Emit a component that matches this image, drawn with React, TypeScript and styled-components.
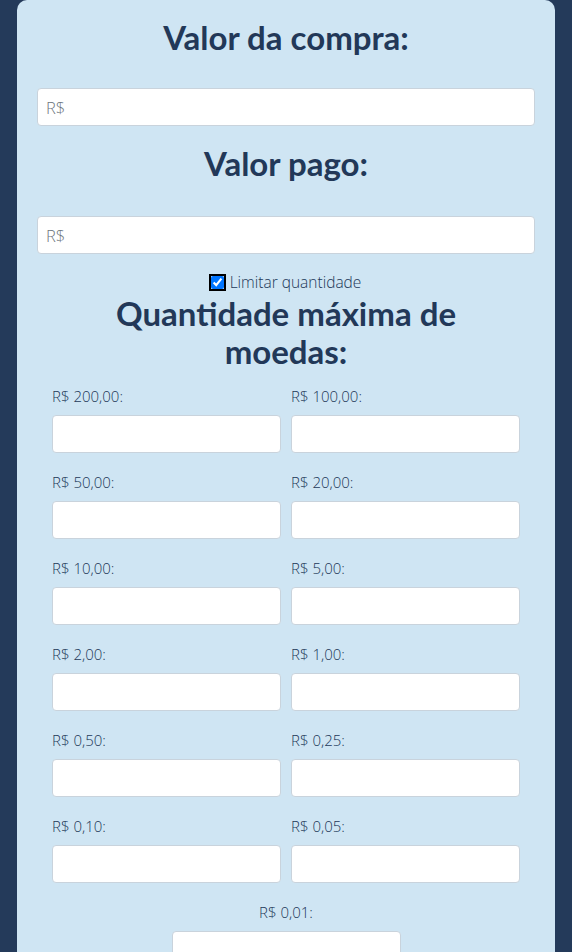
import * as React from 'react';
import styled, { createGlobalStyle } from 'styled-components';

const GlobalStyle = createGlobalStyle`
    html, body {
        margin: 0;
        padding: 0;
        background-color: #243a5a;
    }
    body {
        font-family: Lato, "Open Sans", sans-serif;
    }
`;

const Page = styled.main`
    padding: 0 17px;
    min-height: 952px;
    box-sizing: border-box;
`;

const Card = styled.section`
    background-color: #cfe5f3;
    border-radius: 10px 10px 0 0;
    padding: 17px 20px 40px;
    min-height: 952px;
    box-sizing: border-box;
    display: flex;
    flex-direction: column;
    color: #223858;
`;

const Title = styled.h2<{ gapTop?: number; gapBottom?: number }>`
    font-family: Lato, sans-serif;
    font-weight: 700;
    font-size: 33px;
    line-height: 40px;
    text-align: center;
    margin: ${p => p.gapTop ?? 0}px 0 ${p => p.gapBottom ?? 0}px;
`;

const TextInput = styled.input`
    display: block;
    width: 100%;
    height: 38px;
    box-sizing: border-box;
    background: #fff;
    border: 1px solid #c9d3dc;
    border-radius: 4px;
    padding: 0 8px;
    font-family: "Open Sans", sans-serif;
    font-weight: 300;
    font-size: 16.5px;
    color: #212529;

    &::placeholder {
        color: #6c757d;
    }
`;

const CheckRow = styled.label`
    display: flex;
    align-items: center;
    justify-content: center;
    gap: 6px;
    height: 20px;
    margin: 18px 0 4px;
    font-family: "Open Sans", sans-serif;
    font-weight: 300;
    font-size: 15.5px;
    color: #223858;

    input {
        margin: 0;
        width: 13px;
        height: 13px;
        accent-color: #0075ff;
        outline: 2px solid #000;
        outline-offset: 0;
        border-radius: 2px;
    }
`;

const Heading = styled.h2`
    font-family: Lato, sans-serif;
    font-weight: 700;
    font-size: 33px;
    line-height: 38px;
    text-align: center;
    margin: -2px auto 16px;
    width: 400px;
`;

const CoinGrid = styled.div`
    display: grid;
    grid-template-columns: 229px 229px;
    column-gap: 10px;
    row-gap: 19px;
    justify-content: center;
`;

const Cell = styled.div<{ center?: boolean }>`
    display: flex;
    flex-direction: column;
    gap: 9px;
    grid-column: ${p => (p.center ? '1 / span 2' : 'auto')};
    width: 229px;
    justify-self: center;
    align-items: ${p => (p.center ? 'center' : 'stretch')};
`;

const CellLabel = styled.span`
    font-family: "Open Sans", sans-serif;
    font-weight: 300;
    font-size: 15px;
    line-height: 20px;
    color: #223858;
`;

const coins = [
    '200,00', '100,00',
    '50,00', '20,00',
    '10,00', '5,00',
    '2,00', '1,00',
    '0,50', '0,25',
    '0,10', '0,05',
];

export default function App() {
    return (
        <>
            <GlobalStyle />
            <Page>
                <Card>
                    <Title gapBottom={31}>Valor da compra:</Title>
                    <TextInput placeholder="R$" />
                    <Title gapTop={17} gapBottom={33}>Valor pago:</Title>
                    <TextInput placeholder="R$" />
                    <CheckRow>
                        <input type="checkbox" defaultChecked />
                        Limitar quantidade
                    </CheckRow>
                    <Heading>Quantidade máxima de moedas:</Heading>
                    <CoinGrid>
                        {coins.map(c => (
                            <Cell key={c}>
                                <CellLabel>R$ {c}:</CellLabel>
                                <TextInput />
                            </Cell>
                        ))}
                        <Cell center>
                            <CellLabel>R$ 0,01:</CellLabel>
                            <TextInput />
                        </Cell>
                    </CoinGrid>
                </Card>
            </Page>
        </>
    );
}
